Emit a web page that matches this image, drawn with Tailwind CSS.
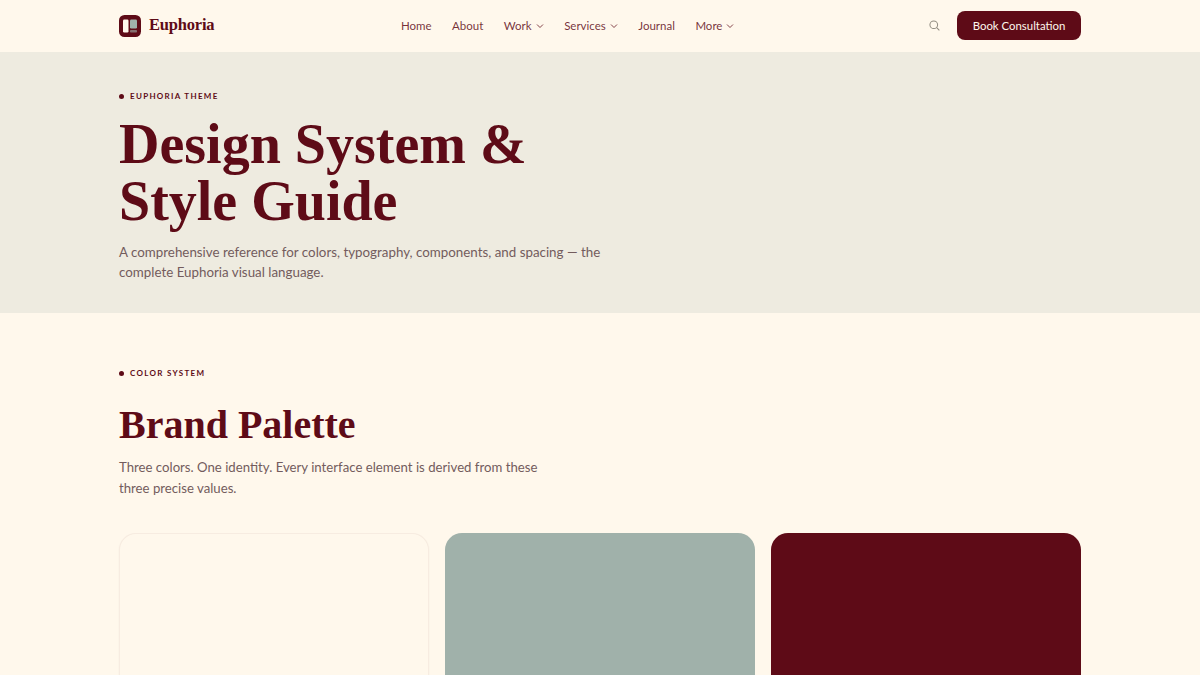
<!DOCTYPE html>
<html lang="en">
  <head>
    <meta charset="UTF-8" />
    <meta name="viewport" content="width=device-width, initial-scale=1.0" />
    <script src="https://cdn.jsdelivr.net/npm/@tailwindcss/browser@4"></script>
    <title>Euphoria Style Guide</title>
  </head>

  <body class="bg-[#fff8ec] font-['Lato',sans-serif] text-[#5e0b17] overflow-hidden h-[675px]">
    <!-- Navigation -->
    <nav class="h-[52px] bg-[#fff8ec]">
      <div class="mx-auto w-[962px] h-full pb-px flex items-center justify-between">
        <a href="#" class="flex items-center gap-2">
          <svg class="w-[22px] h-[22px]" viewBox="0 0 22 22">
            <rect width="22" height="22" rx="5.5" fill="#5e0b17" />
            <rect x="4" y="4.5" width="5.5" height="13" rx="1.2" fill="#fff8ec" />
            <rect x="11" y="4.5" width="7" height="9" rx="1.2" fill="#a0b1aa" />
            <rect x="11" y="15" width="7" height="2.5" rx="0.8" fill="#a0b1aa" fill-opacity="0.6" />
          </svg>
          <span class="font-['Liberation_Serif',serif] text-[16.5px] font-bold tracking-[-0.2px]">Euphoria</span>
        </a>
        <div class="flex items-center gap-[20.5px] text-[11.5px] text-[#5e0b17]/85 mr-[8px]">
          <a href="#">Home</a>
          <a href="#">About</a>
          <a href="#" class="flex items-center gap-1">Work
            <svg class="w-2 h-2" viewBox="0 0 8 8" fill="none" stroke="currentColor" stroke-width="0.9"><path d="M1 2.5 4 5.5 7 2.5" /></svg>
          </a>
          <a href="#" class="flex items-center gap-1">Services
            <svg class="w-2 h-2" viewBox="0 0 8 8" fill="none" stroke="currentColor" stroke-width="0.9"><path d="M1 2.5 4 5.5 7 2.5" /></svg>
          </a>
          <a href="#">Journal</a>
          <a href="#" class="flex items-center gap-1">More
            <svg class="w-2 h-2" viewBox="0 0 8 8" fill="none" stroke="currentColor" stroke-width="0.9"><path d="M1 2.5 4 5.5 7 2.5" /></svg>
          </a>
        </div>
        <div class="flex items-center gap-[17px]">
          <svg class="w-[11px] h-[11px]" viewBox="0 0 12 12" fill="none" stroke="#8f8a7f" stroke-width="1.1"><circle cx="5.2" cy="5.2" r="4.2" /><path d="M8.4 8.4 11.3 11.3" /></svg>
          <a href="#" class="w-[124px] h-[29px] rounded-lg bg-[#5e0b17] text-[#fff8ec] text-[11.4px] flex items-center justify-center">Book Consultation</a>
        </div>
      </div>
    </nav>

    <!-- Hero -->
    <header class="h-[261px] bg-[#eeebe0] pt-[38px]">
      <div class="mx-auto w-[962px]">
        <p class="flex items-center gap-[6px] text-[8px] font-bold tracking-[1.3px] uppercase leading-3">
          <span class="w-[5px] h-[5px] rounded-full bg-[#5e0b17]"></span>Euphoria Theme
        </p>
        <h1 class="mt-[14px] font-['Liberation_Serif',serif] text-[56px] leading-[57px] font-bold">Design System &amp;<br />Style Guide</h1>
        <p class="mt-[12px] w-[500px] text-[13.35px] leading-[20px] text-[#735c5d]">A comprehensive reference for colors, typography, components, and spacing — the complete Euphoria visual language.</p>
      </div>
    </header>

    <!-- Color system -->
    <section class="pt-[54px]">
      <div class="mx-auto w-[962px]">
        <p class="flex items-center gap-[6px] text-[8px] font-bold tracking-[1.3px] uppercase leading-3">
          <span class="w-[5px] h-[5px] rounded-full bg-[#5e0b17]"></span>Color System
        </p>
        <h2 class="mt-[22px] font-['Liberation_Serif',serif] text-[40px] leading-[48px] font-bold">Brand Palette</h2>
        <p class="mt-[8px] w-[440px] text-[13.2px] leading-[21px] text-[#735c5d]">Three colors. One identity. Every interface element is derived from these three precise values.</p>
        <div class="mt-[34px] grid grid-cols-3 gap-4">
          <div class="h-[200px] rounded-[17px] bg-[#fff8ec] border border-[#5e0b17]/5 shadow-xs"></div>
          <div class="h-[200px] rounded-[17px] bg-[#a0b1aa]"></div>
          <div class="h-[200px] rounded-[17px] bg-[#5e0b17]"></div>
        </div>
      </div>
    </section>
  </body>
</html>
